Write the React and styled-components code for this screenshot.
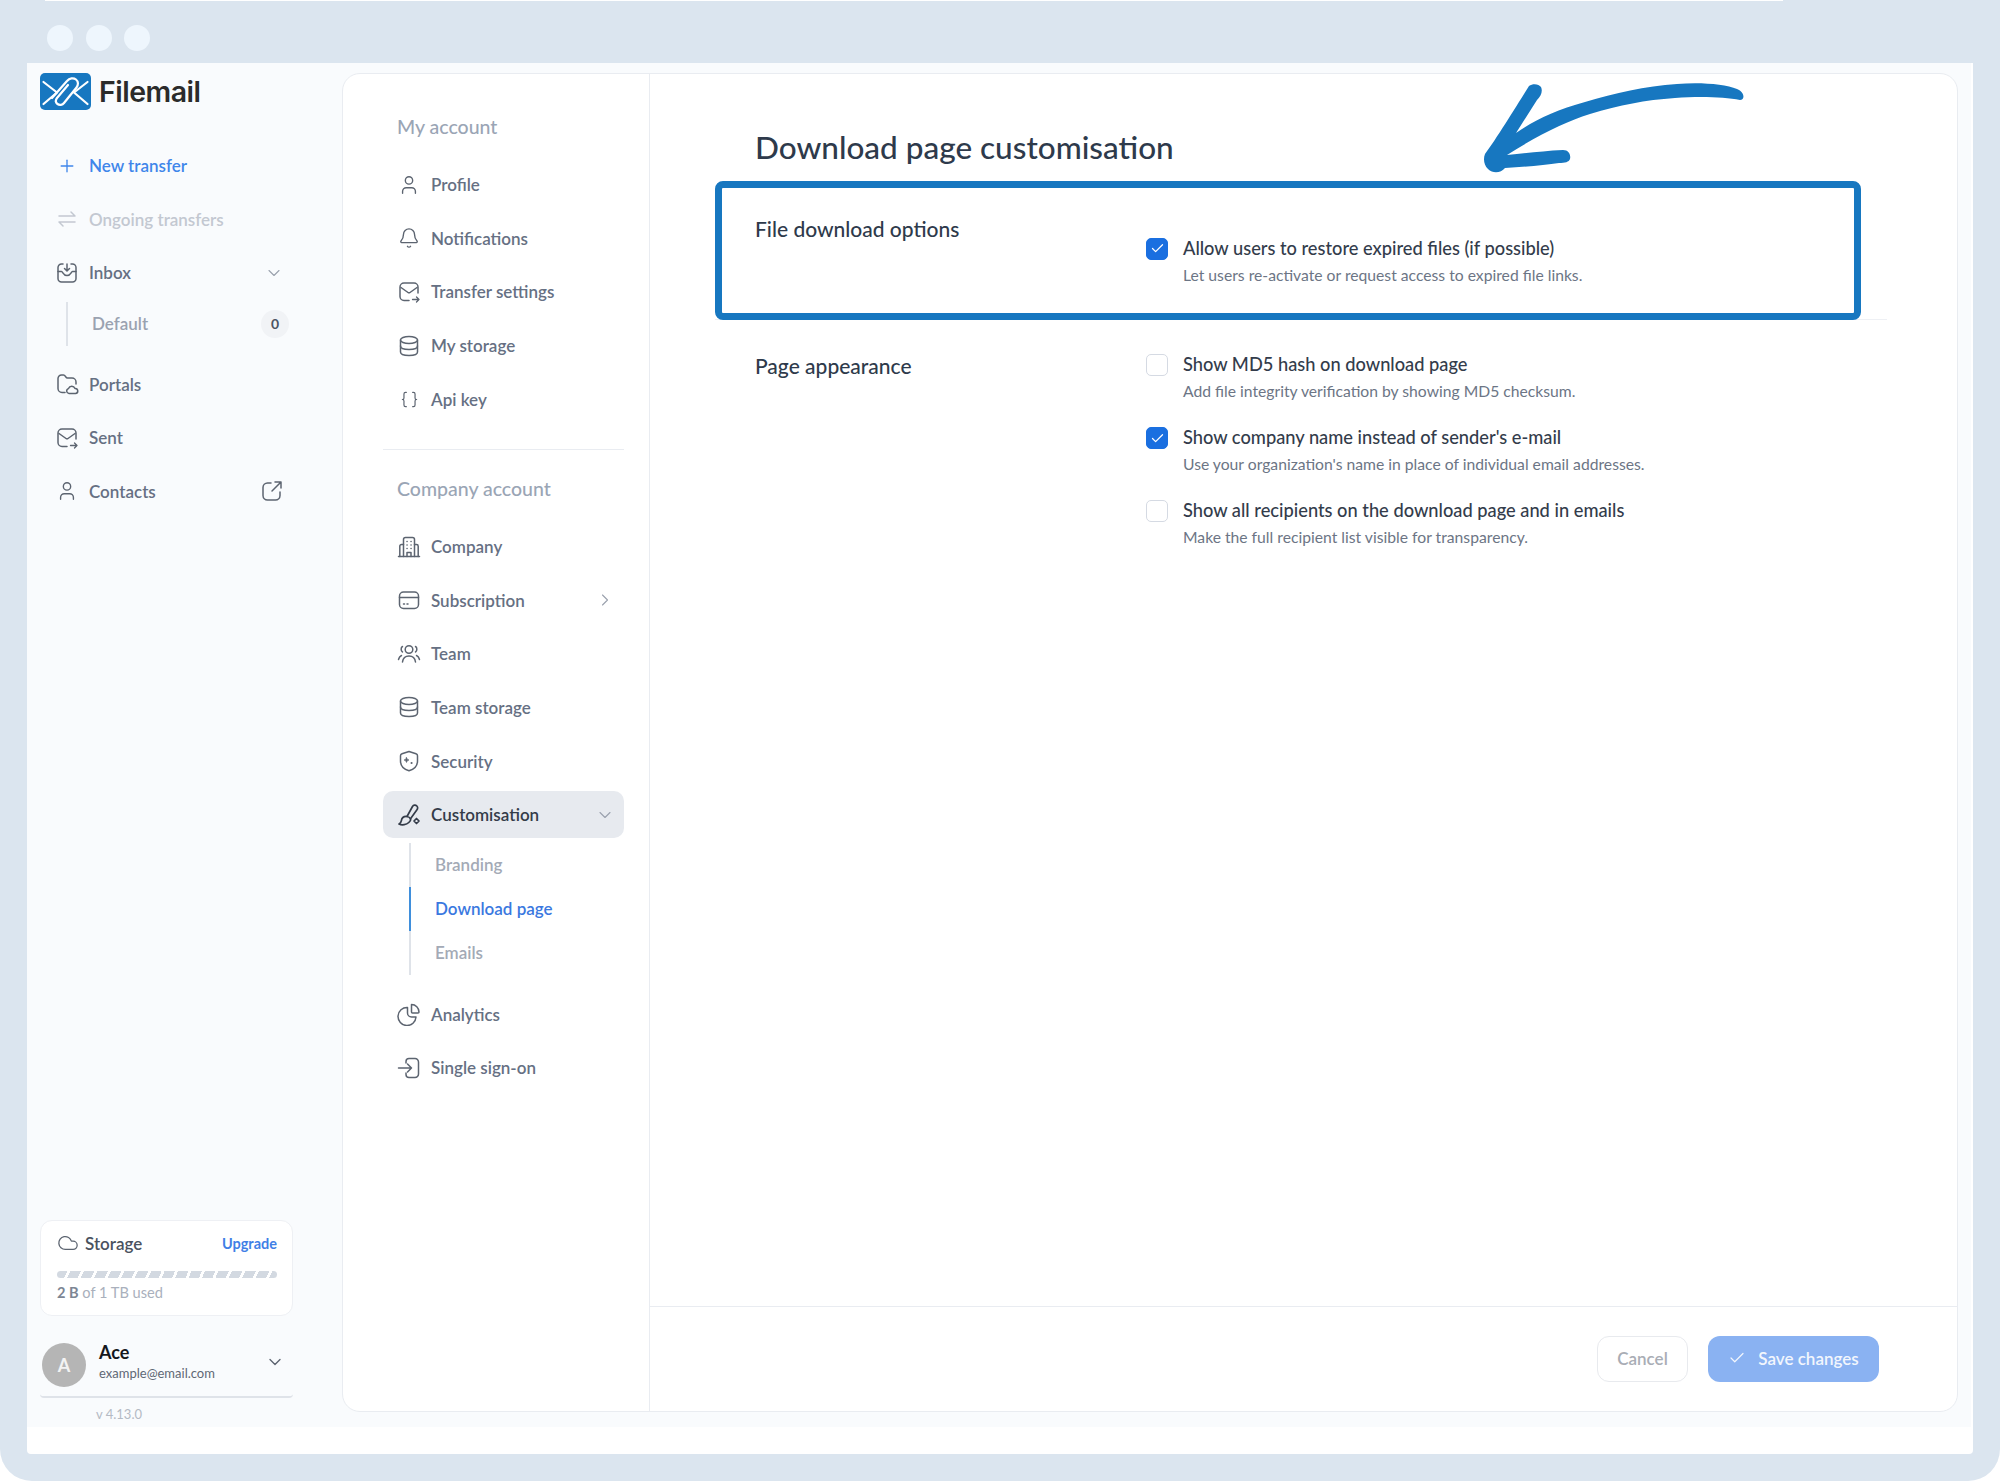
import styled, { createGlobalStyle } from 'styled-components';
import {
  Plus, ChevronDown, ChevronRight, User, Bell, Braces, Cloud, Check,
} from 'lucide-react';

const GlobalStyle = createGlobalStyle`
  html, body { margin: 0; padding: 0; background: #fff; }
  body { font-family: Lato, "Open Sans", sans-serif; color: #2e3a4b; }
  * { box-sizing: border-box; }
`;

const Svg = ({ children, size = 24 }) => (
  <svg width={size} height={size} viewBox="0 0 24 24" fill="none" stroke="currentColor" strokeWidth="1.5" strokeLinecap="round" strokeLinejoin="round">
    {children}
  </svg>
);

const SwapIcon = () => (
  <Svg>
    <path d="M4 9H20L16 5" />
    <path d="M20 15H4L8 19" />
  </Svg>
);
const InboxIcon = () => (
  <Svg>
    <path d="M8 3H6.500A3.500 3.500 0 0 0 3 6.500V17.500A3.500 3.500 0 0 0 6.500 21H17.500A3.500 3.500 0 0 0 21 17.500V6.500A3.500 3.500 0 0 0 17.500 3H16" />
    <path d="M3 10.500H6.500C8 10.500 8 14.500 12 14.500S16 10.500 17.500 10.500H21" />
    <path d="M12 3V9.500M9.500 7.500L12 10L14.500 7.500" />
  </Svg>
);
const FolderCloudIcon = () => (
  <Svg>
    <path d="M10 20.500H7A4 4 0 0 1 3 16.500V6.500A3.500 3.500 0 0 1 6.500 3H8.500C10.500 3 10.500 6 12.500 6H17A4 4 0 0 1 21 10V12" />
    <path d="M14 21.500A2.500 2.500 0 0 1 13.500 16.600A3.500 3.500 0 0 1 20 16.500A2.500 2.500 0 0 1 20.500 21.500Z" />
  </Svg>
);
const MailSendIcon = () => (
  <Svg>
    <path d="M12 20.500H7A4 4 0 0 1 3 16.500V7A4 4 0 0 1 7 3H17A4 4 0 0 1 21 7V13" />
    <path d="M4 7.500L11 12.500C11.700 13 12.300 13 13 12.500L20 7.500" />
    <path d="M15.500 19.500H22M19.500 17L22 19.500L19.500 22" strokeWidth="1.300" />
  </Svg>
);
const ExternalIcon = () => (
  <Svg>
    <path d="M11 4H7.500A4.500 4.500 0 0 0 3 8.500V16.500A4.500 4.500 0 0 0 7.500 21H15.500A4.500 4.500 0 0 0 20 16.500V13" />
    <path d="M12 12L21 3M15 3H21V9" />
  </Svg>
);
const DatabaseIcon = () => (
  <Svg>
    <ellipse cx="12" cy="6" rx="8.500" ry="3.500" />
    <path d="M3.500 6V18C3.500 20 7 21.500 12 21.500S20.500 20 20.500 18V6" />
    <path d="M3.500 12C3.500 14 7 15.500 12 15.500S20.500 14 20.500 12" />
  </Svg>
);
const BuildingIcon = () => (
  <Svg>
    <path d="M1.500 21.500H22.500" />
    <path d="M6.500 21.500V4.500C6.500 3.400 7.300 2.500 8.500 2.500H15.500C16.700 2.500 17.500 3.400 17.500 4.500V21.500" />
    <path d="M6.500 9.500H4.500C3.500 9.500 2.800 10.200 2.800 11.200V21.500M17.500 9.500H19.500C20.500 9.500 21.200 10.200 21.200 11.200V21.500" />
    <path d="M10 21.500V17.500H14V21.500" />
    <path d="M10 6.500H10.100M14 6.500H14.100M10 10H10.100M14 10H14.100M10 13.500H10.100M14 13.500H14.100" />
  </Svg>
);
const CardIcon = () => (
  <Svg>
    <rect x="2.500" y="4" width="19" height="16.500" rx="4" />
    <path d="M2.500 9.500H21.500M6.500 16H7.500M10 16H11" />
  </Svg>
);
const TeamIcon = () => (
  <Svg>
    <circle cx="12" cy="7.500" r="3.800" />
    <path d="M5.500 20C6 16 8.500 14 12 14S18 16 18.500 20" />
    <path d="M5.500 4.500C3.700 5.500 3.700 9 5.500 10M18.500 4.500C20.300 5.500 20.300 9 18.500 10" />
    <path d="M1.500 17.500C2 15.500 3 14.200 4.500 13.500M22.500 17.500C22 15.500 21 14.200 19.500 13.500" />
  </Svg>
);
const ShieldIcon = () => (
  <Svg>
    <path d="M12 2.500L19 4.800C19.900 5.100 20.500 5.900 20.500 6.800V12C20.500 17 16.500 20.500 12 21.800C7.500 20.500 3.500 17 3.500 12V6.800C3.500 5.900 4.100 5.100 5 4.800Z" />
    <path d="M9.500 8.500L10.300 10.200L12 11L10.300 11.800L9.500 13.500L8.700 11.800L7 11L8.700 10.200Z" fill="currentColor" strokeWidth="0.600" />
    <path d="M14.500 14H14.600" strokeWidth="2" />
  </Svg>
);
const BrushIcon = () => (
  <Svg>
    <path d="M10 13.500L15.500 3.500C16.500 2 18.500 1.800 19.700 2.800C20.900 3.800 21 5.700 19.800 7L13.500 15.800" strokeWidth="1.700" />
    <path d="M10 13.500C7 13.200 4.800 15 4.300 17.800C4 19.500 3 20.500 2 21C5 22.500 9.500 21.800 11.800 19.500C13 18.300 14 17 13.500 15.800C12.800 14.500 11.500 13.700 10 13.500Z" strokeWidth="1.700" />
    <path d="M19.500 15.500L22 18L19.500 20.500L17 18Z" strokeWidth="1.700" />
  </Svg>
);
const PieIcon = () => (
  <Svg>
    <path d="M10.500 5.500A9 9 0 1 0 19 15H14.500C12.300 15 10.500 13.200 10.500 11Z" />
    <path d="M14.500 2.500A7.500 7.500 0 0 1 22 10C22 10.600 21.600 11 21 11H15.500C14.900 11 14.500 10.600 14.500 10Z" />
  </Svg>
);
const SsoIcon = () => (
  <Svg>
    <path d="M9 7V5.500A3 3 0 0 1 12 2.500H18A3.500 3.500 0 0 1 21.500 6V18A3.500 3.500 0 0 1 18 21.500H12A3 3 0 0 1 9 18.500V17" />
    <path d="M1.500 12H14.500M10.500 8L14.500 12L10.500 16" />
  </Svg>
);

const LogoMark = () => (
  <svg width="51" height="37" viewBox="0 0 51 37">
    <rect width="51" height="37" rx="5" fill="#1777c0" />
    <g fill="none" stroke="#fff" strokeWidth="2.200" strokeLinecap="round" strokeLinejoin="round">
      <path d="M3.500 9L17 19.500L3.500 31" />
      <path d="M47.500 9L34 19.500L47.500 31" />
      <path d="M12 25L27 8C29.500 5 33.500 4.500 36 6.500C38.500 8.500 38.500 12 36.500 14.500L24 30C22.500 32 19.500 32.500 17.500 31C15.500 29.500 15.500 27 17 25L28 12" />
    </g>
  </svg>
);

const myAccount = [
  { label: 'Profile', icon: <User size={22} strokeWidth={1.5} /> },
  { label: 'Notifications', icon: <Bell size={22} strokeWidth={1.5} /> },
  { label: 'Transfer settings', icon: <MailSendIcon /> },
  { label: 'My storage', icon: <DatabaseIcon /> },
  { label: 'Api key', icon: <Braces size={19} strokeWidth={1.5} /> },
];

const companyAccount = [
  { label: 'Company', icon: <BuildingIcon /> },
  { label: 'Subscription', icon: <CardIcon />, chevron: true },
  { label: 'Team', icon: <TeamIcon /> },
  { label: 'Team storage', icon: <DatabaseIcon /> },
  { label: 'Security', icon: <ShieldIcon /> },
];

const options = [
  { title: 'Show MD5 hash on download page', desc: 'Add file integrity verification by showing MD5 checksum.' },
  { title: "Show company name instead of sender's e-mail", desc: "Use your organization's name in place of individual email addresses.", checked: true },
  { title: 'Show all recipients on the download page and in emails', desc: 'Make the full recipient list visible for transparency.' },
];

function Option({ title, desc, checked }) {
  return (
    <OptionRow>
      <CheckBox $checked={checked}>{checked && <Check size={15} strokeWidth={2} />}</CheckBox>
      <OptionTitle>{title}</OptionTitle>
      <OptionDesc>{desc}</OptionDesc>
    </OptionRow>
  );
}

function App() {
  return (
    <>
      <GlobalStyle />
      <Frame>
        <TitleBar>
          <Dot />
          <Dot />
          <Dot />
        </TitleBar>
        <Window>
          <Shell>
            <Sidebar>
              <LogoRow>
                <LogoMark />
                <LogoText>Filemail</LogoText>
              </LogoRow>
              <SideNav>
                <SideItem $color="#3f86ea"><Plus size={20} strokeWidth={1.6} /><span>New transfer</span></SideItem>
                <SideItem $color="#c3c8d1"><SwapIcon /><span>Ongoing transfers</span></SideItem>
                <SideItem>
                  <InboxIcon /><span>Inbox</span>
                  <SideTrail><ChevronDown size={20} strokeWidth={1.3} color="#9aa1ad" /></SideTrail>
                </SideItem>
                <SideSub>
                  <span>Default</span>
                  <CountPill>0</CountPill>
                </SideSub>
                <SideItem><FolderCloudIcon /><span>Portals</span></SideItem>
                <SideItem><MailSendIcon /><span>Sent</span></SideItem>
                <SideItem>
                  <User size={22} strokeWidth={1.5} /><span>Contacts</span>
                  <SideTrail><ExternalIcon /></SideTrail>
                </SideItem>
              </SideNav>
              <StorageCard>
                <StorageHead>
                  <Cloud size={22} strokeWidth={1.4} color="#5c6470" />
                  <StorageName>Storage</StorageName>
                  <Upgrade>Upgrade</Upgrade>
                </StorageHead>
                <StorageBar />
                <StorageUsed><b>2 B</b> of 1 TB used</StorageUsed>
              </StorageCard>
              <UserRow>
                <Avatar>A</Avatar>
                <UserInfo>
                  <UserName>Ace</UserName>
                  <UserMail>example@email.com</UserMail>
                </UserInfo>
                <UserChevron><ChevronDown size={20} strokeWidth={1.6} /></UserChevron>
              </UserRow>
              <Version>v 4.13.0</Version>
            </Sidebar>

            <Card>
              <SettingsNav>
                <NavHeading>My account</NavHeading>
                {myAccount.map(item => (
                  <NavItem key={item.label}>
                    <NavIcon>{item.icon}</NavIcon>
                    {item.label}
                  </NavItem>
                ))}
                <NavDivider />
                <NavHeading>Company account</NavHeading>
                {companyAccount.map(item => (
                  <NavItem key={item.label}>
                    <NavIcon>{item.icon}</NavIcon>
                    {item.label}
                    {item.chevron && <NavChevron><ChevronRight size={20} strokeWidth={1.3} /></NavChevron>}
                  </NavItem>
                ))}
                <NavItem $active>
                  <NavIcon $active><BrushIcon /></NavIcon>
                  Customisation
                  <NavChevron><ChevronDown size={20} strokeWidth={1.3} /></NavChevron>
                </NavItem>
                <SubList>
                  <SubItem>Branding</SubItem>
                  <SubItem $active>Download page</SubItem>
                  <SubItem>Emails</SubItem>
                </SubList>
                <NavItem>
                  <NavIcon><PieIcon /></NavIcon>
                  Analytics
                </NavItem>
                <NavItem>
                  <NavIcon><SsoIcon /></NavIcon>
                  Single sign-on
                </NavItem>
              </SettingsNav>

              <Pane>
                <PaneBody>
                  <Arrow width="260" height="90" viewBox="0 0 260 90">
                    <path
                      d="M0 71C12 55 34 19 44 3C48 0 54 1 56 4C58 8 56 13 52 17L31 50C48 38 70 27 100 19C130 10 160 3 192 1C215 -1 240 1 252 6C260 9 260 17 255 17C240 14 215 13 190 15C160 17 135 22 105 31C80 39 55 51 22 72C42 70 58 68 78 67C84 67 86 72 85 76C84 79 80 80 74 80C60 82 40 84 20 85C16 90 8 91 3 86C-1 82 -2 76 0 71Z"
                      fill="#1777c0"
                    />
                  </Arrow>
                  <Title>Download page customisation</Title>
                  <Section $first>
                    <Highlight />
                    <SectionLabel>File download options</SectionLabel>
                    <Options $offset={19.5}>
                      <Option
                        title="Allow users to restore expired files (if possible)"
                        desc="Let users re-activate or request access to expired file links."
                        checked
                      />
                    </Options>
                  </Section>
                  <Section>
                    <SectionLabel>Page appearance</SectionLabel>
                    <Options $offset={-1.3}>
                      {options.map(o => <Option key={o.title} {...o} />)}
                    </Options>
                  </Section>
                </PaneBody>
                <Footer>
                  <CancelButton>Cancel</CancelButton>
                  <SaveButton><Check size={18} strokeWidth={1.6} />Save changes</SaveButton>
                </Footer>
              </Pane>
            </Card>
          </Shell>
        </Window>
      </Frame>
    </>
  );
}

export default App;

const Frame = styled.div`
  position: relative;
  width: 2000px;
  height: 1481px;
  padding: 0 27px;
  background: #dbe5ef;
  border-radius: 0 0 32px 32px;
  overflow: hidden;

  &::before {
    content: '';
    position: absolute;
    top: 0;
    left: 45px;
    width: 1738px;
    height: 1px;
    background: #fff;
  }
`;

const TitleBar = styled.div`
  display: flex;
  align-items: center;
  gap: 12.500px;
  height: 63px;
  padding: 13px 0 0 20px;
`;

const Dot = styled.span`
  width: 26px;
  height: 26px;
  border-radius: 50%;
  background: #eef6fd;
`;

const Window = styled.div`
  height: 1391px;
  padding-right: 2px;
  background: #fff;
  border-radius: 0 0 4px 4px;
`;

const Shell = styled.div`
  display: flex;
  align-items: flex-start;
  height: 1364px;
  background: #f9fbfd;
`;

const Sidebar = styled.aside`
  display: flex;
  flex-direction: column;
  flex: none;
  width: 315px;
  height: 100%;
  padding: 10px 49px 3px 13px;
`;

const LogoRow = styled.div`
  display: flex;
  align-items: center;
  gap: 8px;
  height: 37px;
`;

const LogoText = styled.span`
  font-family: Inter, sans-serif;
  font-size: 28.500px;
  font-weight: 600;
  letter-spacing: -0.5px;
  color: #2b2b2b;
`;

const SideNav = styled.nav`
  display: flex;
  flex-direction: column;
  margin-top: 29px;
`;

const SideItem = styled.div`
  display: flex;
  align-items: center;
  gap: 10px;
  height: 53.500px;
  padding-left: 15px;
  font-size: 17px;
  font-weight: 600;
  color: ${props => props.$color || '#667083'};

  > svg {
    flex: none;
    width: 24px;
    color: ${props => props.$color || '#5c6470'};
  }
`;

const SideTrail = styled.span`
  display: flex;
  margin-left: auto;
  margin-right: 9px;
  color: #5c6470;
`;

const SideSub = styled.div`
  display: flex;
  align-items: center;
  justify-content: space-between;
  height: 44px;
  margin: 2px 4px 12px 26px;
  padding-left: 24px;
  border-left: 2px solid #dfe3e9;
  font-size: 17px;
  font-weight: 600;
  color: #9aa2b0;
`;

const CountPill = styled.span`
  display: flex;
  align-items: center;
  justify-content: center;
  width: 28px;
  height: 28px;
  border-radius: 50%;
  background: #f1f3f6;
  font-size: 14px;
  font-weight: 700;
  color: #4c5563;
`;

const StorageCard = styled.div`
  margin-top: auto;
  height: 96px;
  padding: 10px 15px 0 16px;
  background: #fff;
  border: 1px solid #eef0f4;
  border-radius: 12px;
`;

const StorageHead = styled.div`
  display: flex;
  align-items: center;
  gap: 6px;
  height: 24px;
`;

const StorageName = styled.span`
  font-size: 17px;
  font-weight: 600;
  color: #4a5260;
`;

const Upgrade = styled.span`
  margin-left: auto;
  font-size: 14.500px;
  font-weight: 700;
  color: #3f7fe6;
`;

const StorageBar = styled.div`
  height: 7px;
  margin-top: 15.500px;
  border-radius: 4px;
  background: repeating-linear-gradient(115deg, #d3d9e1 0 9.500px, transparent 9.500px 12.200px);
`;

const StorageUsed = styled.div`
  margin-top: 5.500px;
  font-size: 14.600px;
  line-height: 20px;
  color: #a9b0bc;

  b {
    font-weight: 700;
    color: #7d8694;
  }
`;

const UserRow = styled.div`
  display: flex;
  align-items: center;
  height: 65px;
  margin-top: 17px;
  padding: 0 8px 0 2px;
  border-bottom: 2px solid #dfe3e9;
  border-radius: 0 0 4px 4px;
`;

const Avatar = styled.div`
  display: flex;
  align-items: center;
  justify-content: center;
  flex: none;
  width: 44px;
  height: 44px;
  border-radius: 50%;
  background: #b5b5b5;
  font-size: 18px;
  font-weight: 700;
  color: #f3f3f3;
`;

const UserInfo = styled.div`
  flex: 1;
  margin-left: 13px;
  margin-top: -8px;
`;

const UserName = styled.div`
  font-size: 18px;
  font-weight: 700;
  line-height: 24px;
  color: #15181d;
`;

const UserMail = styled.div`
  font-size: 13px;
  line-height: 18px;
  color: #5f6875;
`;

const UserChevron = styled.span`
  display: flex;
  margin-bottom: 5px;
  color: #5c6470;
`;

const Version = styled.div`
  margin-top: 6px;
  padding-left: 56px;
  font-size: 13px;
  line-height: 20px;
  color: #b4bac4;
`;

const Card = styled.section`
  display: flex;
  flex: none;
  width: 1616px;
  height: 1339px;
  margin-top: 10px;
  background: #fff;
  border: 1px solid #e9ecf1;
  border-radius: 18px;
  overflow: hidden;
`;

const SettingsNav = styled.nav`
  flex: none;
  width: 307px;
  padding: 41px 25px 0 40px;
  border-right: 1px solid #e9ecf1;
`;

const NavHeading = styled.div`
  height: 24px;
  margin-bottom: 22px;
  padding-left: 14px;
  font-size: 19.500px;
  font-weight: 500;
  line-height: 24px;
  color: #9aa5b5;
`;

const NavItem = styled.div`
  display: flex;
  align-items: center;
  gap: 10px;
  height: 47.500px;
  margin-bottom: 6.100px;
  padding: 0 9px 0 14px;
  border-radius: 10px;
  font-size: 17px;
  font-weight: 600;
  color: ${props => (props.$active ? '#343c49' : '#667083')};
  background: ${props => (props.$active ? '#e7eaef' : 'transparent')};
`;

const NavIcon = styled.span`
  display: flex;
  align-items: center;
  justify-content: center;
  flex: none;
  width: 24px;
  height: 24px;
  color: ${props => (props.$active ? '#343c49' : '#5c6470')};
`;

const NavChevron = styled.span`
  display: flex;
  margin-left: auto;
  color: #9aa1ad;
`;

const NavDivider = styled.div`
  height: 1px;
  margin: 26px 0 27px;
  background: #e9ecf1;
`;

const SubList = styled.div`
  display: flex;
  flex-direction: column;
  margin: -1.500px 0 15.500px 26px;
  border-left: 2px solid #dfe3e9;
`;

const SubItem = styled.div`
  display: flex;
  align-items: center;
  height: 44px;
  margin-left: -2px;
  padding-left: 24px;
  border-left: 2px solid ${props => (props.$active ? '#3f8fdc' : 'transparent')};
  font-size: 17px;
  font-weight: 600;
  color: ${props => (props.$active ? '#3a78e0' : '#a3aab6')};
`;

const Pane = styled.div`
  display: flex;
  flex-direction: column;
  flex: 1;
`;

const PaneBody = styled.div`
  position: relative;
  flex: 1;
  padding: 52.500px 70px 0 65px;
`;

const Arrow = styled.svg`
  position: absolute;
  top: 9px;
  left: 835px;
  overflow: visible;
`;

const Title = styled.h1`
  margin: 0 0 0 40px;
  font-size: 31.500px;
  font-weight: 500;
  line-height: 40px;
  color: #2e3a4b;
`;

const Section = styled.div`
  position: relative;
  display: flex;
  align-items: flex-start;
  height: ${props => (props.$first ? '139px' : 'auto')};
  margin-top: ${props => (props.$first ? '14.500px' : '0')};
  padding: ${props => (props.$first ? '33px' : '31px')} 0 0 40px;
  border-bottom: ${props => (props.$first ? '1px solid #eef0f4' : 'none')};
`;

const Highlight = styled.div`
  position: absolute;
  top: 0;
  left: 0;
  width: 1146px;
  height: 138.500px;
  border: 7px solid #1777c0;
  border-radius: 8px;
  pointer-events: none;
`;

const SectionLabel = styled.div`
  flex: none;
  width: 391px;
  font-size: 21px;
  font-weight: 500;
  line-height: 30px;
  color: #2e3a4b;
`;

const Options = styled.div`
  display: flex;
  flex-direction: column;
  gap: 18.300px;
  margin-top: ${props => props.$offset || 0}px;
`;

const OptionRow = styled.div`
  display: grid;
  grid-template-columns: 22px 1fr;
  column-gap: 15px;
  align-items: center;
`;

const CheckBox = styled.span`
  display: flex;
  align-items: center;
  justify-content: center;
  width: 22px;
  height: 22px;
  margin-top: 2px;
  border-radius: 5px;
  border: 1px solid ${props => (props.$checked ? '#1a6fe0' : '#d5dae3')};
  background: ${props => (props.$checked ? '#1a6fe0' : '#fff')};
  color: #fff;
`;

const OptionTitle = styled.div`
  font-size: 18.250px;
  font-weight: 500;
  line-height: 28px;
  color: #333c4b;
`;

const OptionDesc = styled.div`
  grid-column: 2;
  margin-top: -1px;
  font-size: 15.700px;
  line-height: 28px;
  color: #6c7585;
`;

const Footer = styled.div`
  display: flex;
  align-items: center;
  justify-content: flex-end;
  gap: 20px;
  flex: none;
  height: 105px;
  padding: 0 78px 0 0;
  border-top: 1px solid #e9ecf1;
`;

const CancelButton = styled.button`
  width: 91px;
  height: 46px;
  padding-bottom: 3px;
  background: #fff;
  border: 1px solid #e8eaee;
  border-radius: 12px;
  font-family: Lato, sans-serif;
  font-size: 17px;
  font-weight: 600;
  color: #a9adb5;
`;

const SaveButton = styled.button`
  display: flex;
  align-items: center;
  justify-content: center;
  gap: 12px;
  width: 171px;
  height: 46px;
  padding-bottom: 3px;
  background: #8ab2f2;
  border: none;
  border-radius: 12px;
  font-family: Lato, sans-serif;
  font-size: 17px;
  font-weight: 600;
  color: #f2f6fd;
`;
